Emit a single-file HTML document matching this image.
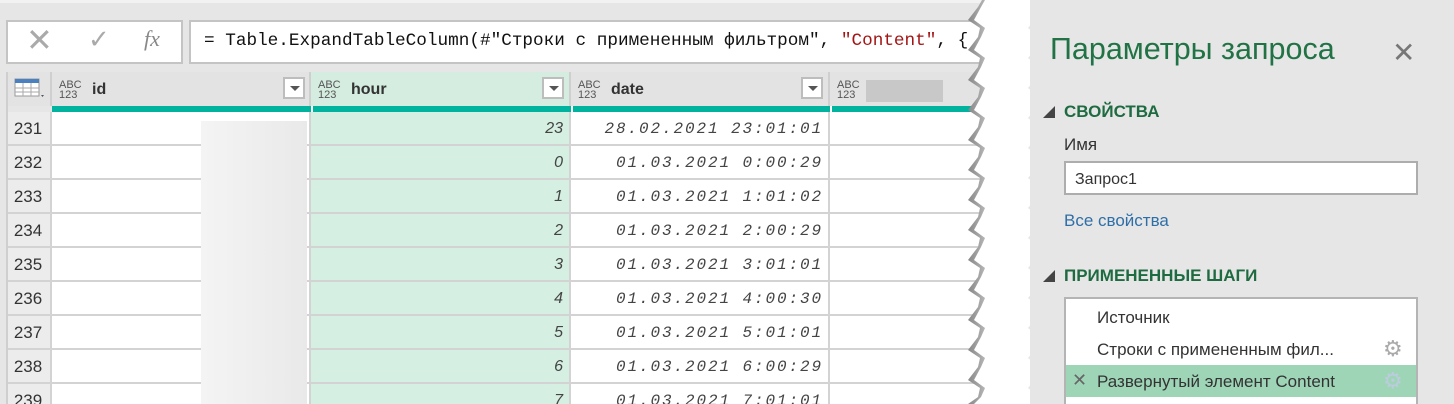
<!DOCTYPE html>
<html><head><meta charset="utf-8"><style>
html,body{margin:0;width:1454px;height:404px;overflow:hidden}
body{background:#fff;font-family:"Liberation Sans",sans-serif;position:relative}
.a{position:absolute}
.lp{left:0;top:0;width:990px;height:404px;background:#e6e6e6;overflow:hidden}
.rp{left:1030px;top:0;width:424px;height:404px;background:#e6e6e6}
.box{background:#fff;border:2px solid #c4c4c4;box-sizing:border-box}
.mono{font-family:"Liberation Mono",monospace}
.hdr{top:72px;height:34px;background:#e3e3e3;border-right:2px solid #cfcfcf;box-sizing:border-box}
.ty{font-size:11px;line-height:10px;color:#555;top:8px}
.hn{font-weight:bold;font-size:16px;color:#333;top:8px}
.dd{width:22px;height:22px;border:2px solid #bdbdbd;background:#fff;box-sizing:border-box;top:5px}
.dd:after{content:"";position:absolute;left:5px;top:7px;border:5px solid transparent;border-top:5px solid #555}
.row{left:6px;width:980px;height:34px;box-sizing:border-box;border-bottom:2px solid #d3d3d3}
.c{position:absolute;top:0;height:32px;line-height:34px;font-size:16px;box-sizing:border-box;border-right:2px solid #d3d3d3}
.num{left:0;width:46px;background:#ececec;color:#333;text-align:center;font-size:17px}
.id{left:46px;width:259px;background:#fff}
.hr{left:305px;width:260px;background:#d5efe2;text-align:right;padding-right:6px;font-style:italic;color:#444}
.dt{left:565px;width:259px;background:#fff;text-align:right;padding-right:5px;font-style:italic;color:#444;font-family:"Liberation Mono",monospace;letter-spacing:1.9px}
.ex{left:824px;width:160px;background:#fff}
</style></head><body>
<div class="a lp">
 <div class="a" style="left:0;top:0;width:990px;height:3px;background:#f2f2f2"></div>
 <div class="a box" style="left:6px;top:20px;width:177px;height:44px"></div>
 <div class="a" style="left:26px;top:22px;font-size:32px;color:#aaa;line-height:36px">✕</div>
 <div class="a" style="left:88px;top:24px;font-size:26px;color:#aaa">✓</div>
 <div class="a" style="left:144px;top:26px;font-size:22px;color:#888;font-style:italic;font-family:'Liberation Serif',serif">fx</div>
 <div class="a box" style="left:189px;top:20px;width:820px;height:44px"></div>
 <div class="a mono" style="left:204px;top:31px;font-size:17.7px;color:#111;white-space:nowrap">= Table.ExpandTableColumn(#"Строки с примененным фильтром", <span style="color:#a31515">"Content"</span>, {</div>
 <div class="a hdr" style="left:6px;width:46px;border-left:2px solid #cfcfcf"></div>
 <svg class="a" style="left:14px;top:78px" width="32" height="22"><rect x="1" y="1" width="24" height="17" fill="#fff" stroke="#999"/><rect x="1" y="1" width="24" height="4" fill="#4a7fc0"/><path d="M9 5V18M17 5V18M1 10H25M1 14H25" stroke="#aaa"/><path d="M27 17l3 0-1.5 2z" fill="#555"/></svg>
 <div class="a hdr" style="left:52px;width:259px"></div>
 <div class="a ty" style="left:59px;top:80px">ABC<br>123</div>
 <div class="a hn" style="left:92px;top:81px">id</div>
 <div class="a dd" style="left:283px;top:77px"></div>
 <div class="a hdr" style="left:311px;width:260px;background:#d4ede0"></div>
 <div class="a ty" style="left:318px;top:80px">ABC<br>123</div>
 <div class="a hn" style="left:351px;top:81px">hour</div>
 <div class="a dd" style="left:542px;top:77px"></div>
 <div class="a hdr" style="left:571px;width:259px"></div>
 <div class="a ty" style="left:578px;top:80px">ABC<br>123</div>
 <div class="a hn" style="left:611px;top:81px">date</div>
 <div class="a dd" style="left:801px;top:77px"></div>
 <div class="a hdr" style="left:830px;width:160px"></div>
 <div class="a ty" style="left:837px;top:80px">ABC<br>123</div>
 <div class="a" style="left:866px;top:80px;width:77px;height:22px;background:#c8c8c8"></div>
 <div class="a" style="left:6px;top:106px;width:46px;height:6px;background:#e6e6e6"></div>
 <div class="a" style="left:52px;top:106px;width:938px;height:6px;background:#00b39f"></div>
 <div class="a" style="left:311px;top:106px;width:2px;height:6px;background:#fff"></div>
 <div class="a" style="left:571px;top:106px;width:2px;height:6px;background:#fff"></div>
 <div class="a" style="left:830px;top:106px;width:2px;height:6px;background:#fff"></div>
 <div class="a row" style="top:112px"><div class="c num">231</div><div class="c id"></div><div class="c hr">23</div><div class="c dt">28.02.2021 23:01:01</div><div class="c ex"></div></div>
 <div class="a row" style="top:146px"><div class="c num">232</div><div class="c id"></div><div class="c hr">0</div><div class="c dt">01.03.2021 0:00:29</div><div class="c ex"></div></div>
 <div class="a row" style="top:180px"><div class="c num">233</div><div class="c id"></div><div class="c hr">1</div><div class="c dt">01.03.2021 1:01:02</div><div class="c ex"></div></div>
 <div class="a row" style="top:214px"><div class="c num">234</div><div class="c id"></div><div class="c hr">2</div><div class="c dt">01.03.2021 2:00:29</div><div class="c ex"></div></div>
 <div class="a row" style="top:248px"><div class="c num">235</div><div class="c id"></div><div class="c hr">3</div><div class="c dt">01.03.2021 3:01:01</div><div class="c ex"></div></div>
 <div class="a row" style="top:282px"><div class="c num">236</div><div class="c id"></div><div class="c hr">4</div><div class="c dt">01.03.2021 4:00:30</div><div class="c ex"></div></div>
 <div class="a row" style="top:316px"><div class="c num">237</div><div class="c id"></div><div class="c hr">5</div><div class="c dt">01.03.2021 5:01:01</div><div class="c ex"></div></div>
 <div class="a row" style="top:350px"><div class="c num">238</div><div class="c id"></div><div class="c hr">6</div><div class="c dt">01.03.2021 6:00:29</div><div class="c ex"></div></div>
 <div class="a row" style="top:384px"><div class="c num">239</div><div class="c id"></div><div class="c hr">7</div><div class="c dt">01.03.2021 7:01:01</div><div class="c ex"></div></div>
 <div class="a" style="left:201px;top:121px;width:106px;height:283px;background:linear-gradient(90deg,#f4f4f4,#e9e9e9)"></div>
 <div class="a" style="left:6px;top:72px;width:2px;height:332px;background:#cfcfcf"></div>
</div>
<svg class="a" style="left:960px;top:0" width="40" height="404">
<defs><linearGradient id="g" x1="0" x2="1"><stop offset="0" stop-color="#888"/><stop offset="1" stop-color="#ddd"/></linearGradient></defs>
<polygon fill="url(#g)" points="40,0 22,0 18,7 8,20 20,28 18,37 8,50 20,58 18,67 8,80 20,88 18,97 8,110 20,118 18,127 8,140 20,148 18,157 8,170 20,178 18,187 8,200 20,208 18,217 8,230 20,238 18,247 8,260 20,268 18,277 8,290 20,298 18,307 8,320 20,328 18,337 8,350 20,358 18,367 8,380 20,388 18,397 8,404 40,404"/>
<polygon fill="#fff" points="40,0 25,0 21,7 14,20 25,28 21,37 14,50 25,58 21,67 14,80 25,88 21,97 14,110 25,118 21,127 14,140 25,148 21,157 14,170 25,178 21,187 14,200 25,208 21,217 14,230 25,238 21,247 14,260 25,268 21,277 14,290 25,298 21,307 14,320 25,328 21,337 14,350 25,358 21,367 14,380 25,388 21,397 14,404 40,404"/>
</svg>
<div class="a rp"></div>
<svg class="a" style="left:1024px;top:0" width="20" height="404">
<polygon fill="#e6e6e6" points="20,0 6,0 20,10 4,28 20,40 4,58 20,70 4,88 20,100 4,118 20,130 4,148 20,160 4,178 20,190 4,208 20,220 4,238 20,250 4,268 20,280 4,298 20,310 4,328 20,340 4,358 20,370 4,388 20,400 20,404"/>
</svg>
<div class="a" style="left:1050px;top:32px;font-size:30.5px;color:#217346;white-space:nowrap">Параметры запроса</div>
<div class="a" style="left:1392px;top:36px;font-size:28px;color:#777">✕</div>
<div class="a" style="left:1043px;top:106px;border-left:12px solid transparent;border-bottom:12px solid #444"></div>
<div class="a" style="left:1064px;top:102px;font-size:17px;font-weight:bold;color:#1e6b41">СВОЙСТВА</div>
<div class="a" style="left:1064px;top:135px;font-size:17px;color:#333">Имя</div>
<div class="a box" style="left:1064px;top:161px;width:354px;height:34px;border-color:#adadad;font-size:16px;color:#333;padding:8px 0 0 9px">Запрос1</div>
<div class="a" style="left:1064px;top:211px;font-size:17px;color:#2e6fa8">Все свойства</div>
<div class="a" style="left:1043px;top:270px;border-left:12px solid transparent;border-bottom:12px solid #444"></div>
<div class="a" style="left:1064px;top:266px;font-size:17px;font-weight:bold;color:#1e6b41">ПРИМЕНЕННЫЕ ШАГИ</div>
<div class="a box" style="left:1064px;top:297px;width:354px;height:107px;border-color:#b4b4b4;border-bottom:none"></div>
<div class="a" style="left:1097px;top:308px;font-size:17px;color:#333">Источник</div>
<div class="a" style="left:1097px;top:340px;font-size:17px;color:#333;white-space:nowrap">Строки с примененным фил...</div>
<div class="a" style="left:1383px;top:336px;font-size:22px;color:#aaa">⚙</div>
<div class="a" style="left:1066px;top:365px;width:350px;height:32px;background:#9fd5b7"></div>
<div class="a" style="left:1072px;top:370px;font-size:18px;color:#666">✕</div>
<div class="a" style="left:1097px;top:372px;font-size:17px;color:#333;white-space:nowrap">Развернутый элемент Content</div>
<div class="a" style="left:1383px;top:368px;font-size:22px;color:#bcd">⚙</div>
</body></html>
